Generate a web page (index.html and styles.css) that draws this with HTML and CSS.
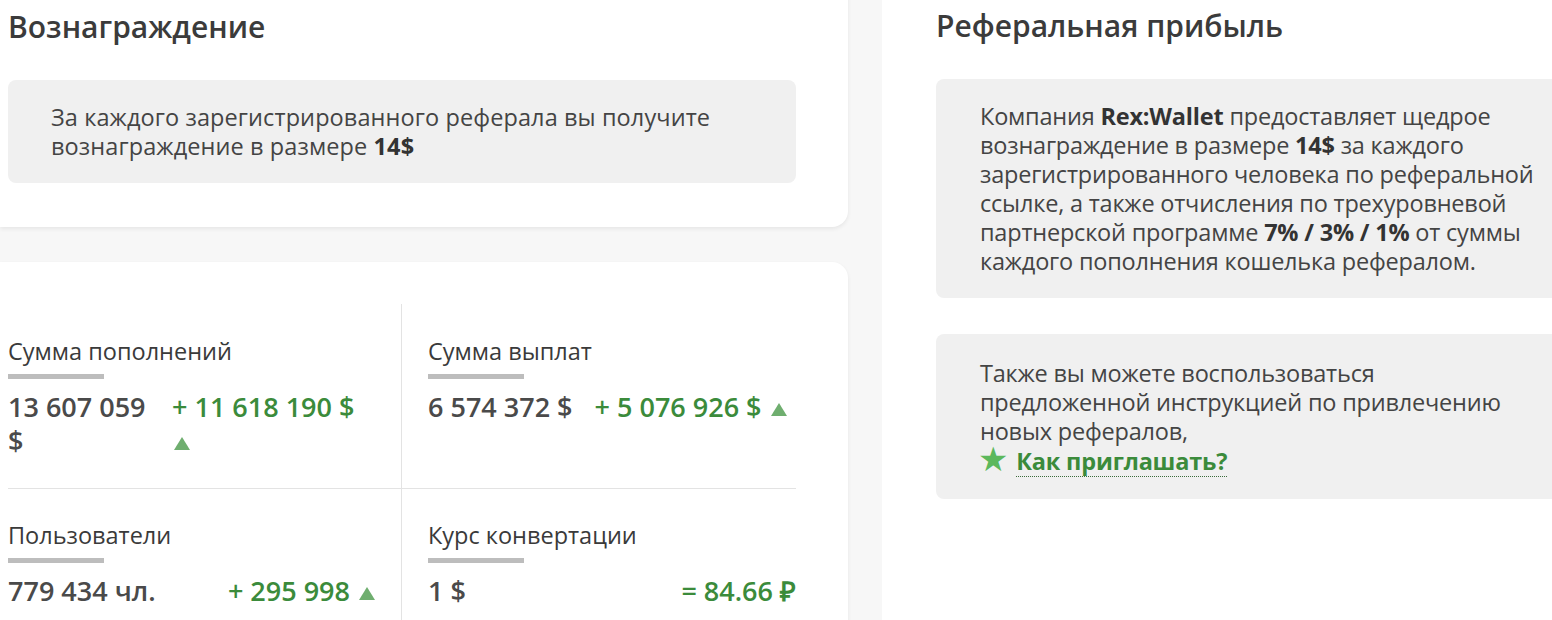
FILE: index.html
```html
<!DOCTYPE html>
<html>
<head>
  <title>Реферальная программа</title>
  <meta charset="UTF-8">
  <link rel="stylesheet" href="styles.css">
</head>
<body>
  <div class="page">
    <div class="left">
      <div class="card card-top">
        <h2 class="title">Вознаграждение</h2>
        <div class="note">
          За каждого зарегистрированного реферала вы получите
          вознаграждение в размере&nbsp;<b>14$</b>
        </div>
      </div>

      <div class="card card-stats">
        <div class="stats">
          <div class="stat">
            <div class="label">Сумма пополнений</div>
            <div class="bar"></div>
            <div class="values">
              <span class="val val-narrow">13 607 059 $</span>
              <span class="up up-narrow">+ 11 618 190 $ <i class="tri"></i></span>
            </div>
          </div>
          <div class="stat">
            <div class="label">Сумма выплат</div>
            <div class="bar"></div>
            <div class="values">
              <span class="val">6 574 372 $</span>
              <span class="up">+ 5 076 926 $ <i class="tri"></i></span>
            </div>
          </div>
          <div class="stat">
            <div class="label">Пользователи</div>
            <div class="bar"></div>
            <div class="values spread">
              <span class="val">779 434 чл.</span>
              <span class="up">+ 295 998 <i class="tri"></i></span>
            </div>
          </div>
          <div class="stat">
            <div class="label">Курс конвертации</div>
            <div class="bar"></div>
            <div class="values spread">
              <span class="val">1 $</span>
              <span class="up">= 84.66 ₽</span>
            </div>
          </div>
        </div>
      </div>
    </div>

    <div class="right">
      <h2 class="title">Реферальная прибыль</h2>
      <div class="note note-r">
        Компания <b>Rex:Wallet</b> предоставляет щедрое<br>
        вознаграждение в размере <b>14$</b> за каждого<br>
        зарегистрированного человека по реферальной<br>
        ссылке, а также отчисления по трехуровневой<br>
        партнерской программе <b>7% / 3% / 1%</b> от суммы<br>
        каждого пополнения кошелька рефералом.
      </div>
      <div class="note note-r note-how">
        Также вы можете воспользоваться<br>
        предложенной инструкцией по привлечению<br>
        новых рефералов,<br>
        <span class="link-row"><span class="star">★</span><a class="how" href="#">Как приглашать?</a></span>
      </div>
    </div>
  </div>
</body>
</html>
```

FILE: styles.css
```css
body { margin: 0; background: #f7f7f7; font-family: "Open Sans", sans-serif; color: #3a3a3a; overflow: hidden; }
.page { display: flex; height: 620px; }
.left { width: 848px; flex-shrink: 0; display: flex; flex-direction: column; gap: 35px; margin-top: -20px; margin-left: -30px; padding-left: 30px; }
.card { background: #fff; box-shadow: 0 2px 4px rgba(0,0,0,0.07); }
.card-top { padding: 29px 52px 44px 8px; border-radius: 0 0 16px 0; }
.card-stats { border-radius: 0 16px 0 0; padding: 42px 52px 0 8px; flex: 1; }
.title { margin: 0; font-size: 30px; font-weight: 600; color: #3b3b3b; line-height: 36px; }
.note { background: #f0f0f0; border-radius: 8px; margin-top: 35px; padding: 23px 20px 22px 43px; font-size: 23.5px; letter-spacing: 0.1px; line-height: 29px; color: #444; }
.note b { color: #333; }
.stats { display: grid; grid-template-columns: 394px 394px; }
.stat { box-sizing: border-box; padding: 32px 0 0 0; }
.stat:nth-child(odd) { border-right: 1px solid #e3e3e3; padding-right: 20px; }
.stat:nth-child(even) { padding-left: 26px; }
.stat:nth-child(1), .stat:nth-child(2) { border-bottom: 1px solid #e3e3e3; height: 185px; }
.stat:nth-child(3), .stat:nth-child(4) { padding-top: 31px; height: 140px; }
.label { font-size: 23.5px; line-height: 30px; color: #3a3a3a; }
.bar { width: 96px; height: 5px; background: #bdbdbd; margin: 8px 0 11px; }
.values { display: flex; gap: 22px; font-size: 27px; font-weight: 600; line-height: 34px; }
.values.spread { justify-content: space-between; padding-right: 6px; }
.stat:nth-child(4) .values.spread { padding-right: 0; }
.val { color: #4a4a4a; }
.val-narrow { width: 142px; flex-shrink: 0; }
.up { color: #3b8b3b; }
.up-narrow { width: 190px; }
.tri { display: inline-block; width: 0; height: 0; border-left: 8px solid transparent; border-right: 8px solid transparent; border-bottom: 13px solid #6fae6f; margin-left: 2px; vertical-align: 1px; }
.right { flex: 1; min-width: 0; margin-left: 34px; background: #fff; padding: 8px 0 0 54px; }
.note-r { margin-top: 35px; margin-right: -60px; padding: 23px 10px 22px 44px; font-size: 23.5px; letter-spacing: -0.2px; white-space: nowrap; }
.note-how { margin-top: 36px; padding-top: 25px; padding-bottom: 22px; }
.link-row { display: inline-flex; align-items: center; height: 30px; }
.star { color: #5cb85c; font-size: 34px; line-height: 30px; margin: -4px 8px 0 -2px; font-family: "DejaVu Sans", sans-serif; }
.how { color: #3b8b3b; font-weight: 700; text-decoration: none; border-bottom: 1px dotted #3b6b3b; line-height: 30px; }
```
